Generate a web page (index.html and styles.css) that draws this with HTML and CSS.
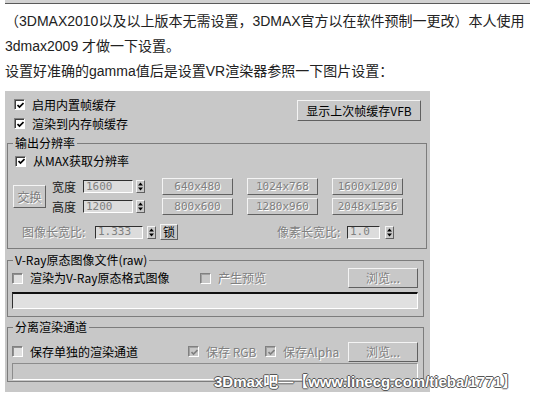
FILE: index.html
```html
<!DOCTYPE html>
<html lang="zh-CN">
<head>
  <meta charset="UTF-8" />
  <title>VRay 帧缓存设置</title>
  <link rel="stylesheet" href="styles.css">
</head>
<body>
  <div class="topbar"></div>

  <div class="intro">
    <p>（3DMAX2010以及以上版本无需设置，3DMAX官方以在软件预制一更改）本人使用<br>3dmax2009 才做一下设置。</p>
    <p>设置好准确的gamma值后是设置VR渲染器参照一下图片设置：</p>
  </div>

  <div class="panel">
    <div class="top-row">
      <div class="checks">
        <div class="check"><span class="box"><svg viewBox="0 0 7 7"><path d="M0.5 3l2 2 4-4"/></svg></span>启用内置帧缓存</div>
        <div class="check"><span class="box"><svg viewBox="0 0 7 7"><path d="M0.5 3l2 2 4-4"/></svg></span>渲染到内存帧缓存</div>
      </div>
      <span class="btn btn-vfb">显示上次帧缓存VFB</span>
    </div>

    <fieldset class="group group-res">
      <legend>输出分辨率</legend>
      <div class="check check-max"><span class="box"><svg viewBox="0 0 7 7"><path d="M0.5 3l2 2 4-4"/></svg></span>从MAX获取分辨率</div>

      <div class="res">
        <span class="btn off btn-swap">交换</span>
        <div class="dims">
          <div class="dim">
            <span class="lbl">宽度</span>
            <span class="field">1600</span>
            <span class="spin"><svg viewBox="0 0 7 11"><path d="M3.5 1.5L6 4.5H1Z M3.5 9.5L6 6.5H1Z"/></svg></span>
          </div>
          <div class="dim">
            <span class="lbl">高度</span>
            <span class="field">1200</span>
            <span class="spin"><svg viewBox="0 0 7 11"><path d="M3.5 1.5L6 4.5H1Z M3.5 9.5L6 6.5H1Z"/></svg></span>
          </div>
        </div>
        <div class="presets">
          <span class="btn off mono">640x480</span>
          <span class="btn off mono">1024x768</span>
          <span class="btn off mono">1600x1200</span>
          <span class="btn off mono">800x600</span>
          <span class="btn off mono">1280x960</span>
          <span class="btn off mono">2048x1536</span>
        </div>
      </div>

      <div class="aspect">
        <span class="lbl off lbl-img">图像长宽比:</span>
        <span class="field field-img">1.333</span>
        <span class="spin"><svg viewBox="0 0 7 11"><path d="M3.5 1.5L6 4.5H1Z M3.5 9.5L6 6.5H1Z"/></svg></span>
        <span class="btn btn-lock">锁</span>
        <span class="lbl off lbl-px">像素长宽比:</span>
        <span class="field field-px">1.0</span>
        <span class="spin"><svg viewBox="0 0 7 11"><path d="M3.5 1.5L6 4.5H1Z M3.5 9.5L6 6.5H1Z"/></svg></span>
      </div>
    </fieldset>

    <fieldset class="group group-raw">
      <legend>V-Ray原态图像文件(raw)</legend>
      <div class="opt-row">
        <div class="check check-raw"><span class="box empty"></span>渲染为V-Ray原态格式图像</div>
        <div class="check off"><span class="box dis"></span>产生预览</div>
        <span class="btn off btn-browse">浏览...</span>
      </div>
      <div class="path"></div>
    </fieldset>

    <fieldset class="group group-split">
      <legend>分离渲染通道</legend>
      <div class="opt-row opt-split">
        <div class="check check-split"><span class="box empty"></span>保存单独的渲染通道</div>
        <div class="check off check-rgb"><span class="box dis"><svg viewBox="0 0 7 7"><path d="M0.5 3l2 2 4-4"/></svg></span>保存 RGB</div>
        <div class="check off"><span class="box dis"><svg viewBox="0 0 7 7"><path d="M0.5 3l2 2 4-4"/></svg></span>保存Alpha</div>
        <span class="btn off btn-browse">浏览...</span>
      </div>
      <div class="path path-off"></div>
    </fieldset>
  </div>

  <div class="watermark">3Dmax吧—【www.linecg.com/tieba/1771】</div>
</body>
</html>
```

FILE: styles.css
```css
* { box-sizing: border-box; }
body {
  margin: 0;
  background: #fff;
  font-family: 'Liberation Sans', 'Noto Sans CJK SC', sans-serif;
  color: #222;
}
.topbar {
  margin-left: 5px;
  width: 525px;
  height: 4px;
  background: #d2d2d2;
  border-bottom: 1px solid #5a5a5a;
}
.intro {
  padding: 5px 0 0 5px;
  font-size: 14px;
  line-height: 25px;
}
.intro p { margin: 0; white-space: nowrap; }

/* 3ds max panel */
.panel {
  margin: 7px 0 0 5px;
  width: 425px;
  height: 301px;
  background: #c8c8c8;
  font-family: 'Noto Sans CJK SC', sans-serif;
  font-size: 12px;
  line-height: 16px;
  color: #000;
  overflow: hidden;
}
.off { color: #808080; text-shadow: 1px 1px 0 #fff; }
.mono { font-family: 'DejaVu Sans Mono', monospace; font-size: 11px; }

.top-row {
  display: flex;
  justify-content: space-between;
  align-items: flex-start;
  padding: 4px 9px 0 9px;
}
.check {
  display: flex;
  align-items: center;
  gap: 7px;
  height: 19px;
  white-space: nowrap;
}
.box {
  width: 11px; height: 11px;
  flex: none;
  display: flex; align-items: center; justify-content: center;
  background: #fff;
  border: 1px solid;
  border-color: #808080 #fff #fff #808080;
  box-shadow: inset 1px 1px 0 #404040;
}
.box svg { width: 7px; height: 7px; margin: 1px 0 0 1px; }
.box path { fill: none; stroke: #000; stroke-width: 1.7; }
.box.empty { background: #e0e0e0; box-shadow: inset 1px 1px 0 #909090; }
.box.dis { background: #c8c8c8; box-shadow: inset 1px 1px 0 #a0a0a0; }
.box.dis path { stroke: #808080; }

.btn {
  display: flex;
  align-items: center;
  justify-content: center;
  background: #c8c8c8;
  border: 1px solid;
  border-color: #f4f4f4 #606060 #606060 #f4f4f4;
  white-space: nowrap;
}
.btn-vfb { margin-top: 5px; width: 124px; height: 21px; }

/* group boxes */
.group {
  margin: 2px 3px 0 2px;
  padding: 2px 0 8px 0;
  border: 1px solid #7c7c7c;
  min-width: 0;
}
.group legend {
  margin-left: 5px;
  padding: 0 2px;
  line-height: 16px;
}
.check-max { margin-left: 7px; height: 16px; }

.res {
  display: flex;
  align-items: center;
  margin-top: 9px;
}
.btn-swap { margin-left: 5px; width: 33px; height: 23px; }
.dims {
  display: flex;
  flex-direction: column;
  gap: 3px;
  margin-left: 6px;
}
.dim {
  display: flex;
  align-items: center;
  height: 17px;
}
.dim .lbl { width: 31px; color: #202020; }
.field {
  display: flex;
  align-items: center;
  height: 13px;
  padding-left: 2px;
  background: #dcdcdc;
  border: 1px solid;
  border-color: #303030 #fff #fff #303030;
  color: #808080;
  font-family: 'DejaVu Sans Mono', monospace;
  font-size: 11px;
}
.dim .field { width: 50px; }
.spin {
  margin-left: 3px;
  width: 9px; height: 13px;
  display: flex;
  background: #c8c8c8;
  border: 1px solid;
  border-color: #f4f4f4 #606060 #606060 #f4f4f4;
}
.spin svg { width: 7px; height: 11px; }
.spin path { fill: #000; }
.presets {
  display: grid;
  grid-template-columns: repeat(3, 71px);
  grid-auto-rows: 17px;
  column-gap: 14px;
  row-gap: 3px;
  margin-left: 17px;
}

.aspect {
  display: flex;
  align-items: center;
  height: 16px;
  margin-top: 9px;
}
.lbl-img { margin-left: 14px; width: 73px; }
.field-img { width: 48px; }
.aspect .spin { margin-left: 4px; }
.btn-lock { margin-left: 4px; width: 18px; height: 16px; }
.lbl-px { margin-left: 99px; width: 70px; }
.field-px { width: 33px; }
.field-px + .spin { margin-left: 5px; }

.group-raw { margin: 3px 6px 0 2px; padding: 0 0 7px 0; }
.opt-row {
  display: flex;
  align-items: center;
  height: 20px;
}
.check-raw { margin-left: 4px; width: 188px; }
.btn-browse { margin-left: auto; margin-right: 5px; width: 70px; height: 20px; }
.path {
  margin: 4px 5px 0 4px;
  height: 17px;
  background: #e0e0e0;
  border: 1px solid;
  border-top: 2px solid #101010;
  border-color: #101010 #fff #fff #303030;
}

.group-split { margin: 2px 6px 0 2px; padding: 6px 0 1px 0; }
.opt-split { height: 21px; }
.check-split { margin-left: 4px; width: 176px; }
.check-rgb { width: 77px; }
.path-off {
  margin-top: 1px;
  background: #c8c8c8;
  border-top: 1px solid #8c8c8c;
  border-left-color: #8c8c8c;
}

.watermark {
  position: absolute;
  left: 214px;
  top: 372px;
  font-family: 'Liberation Sans', 'Noto Sans CJK SC', sans-serif;
  font-weight: bold;
  font-size: 15px;
  line-height: 20px;
  color: #fff;
  white-space: nowrap;
  text-shadow: 1px 0 0 #555, -1px 0 0 #555, 0 1px 0 #555, 0 -1px 0 #555;
}
```
